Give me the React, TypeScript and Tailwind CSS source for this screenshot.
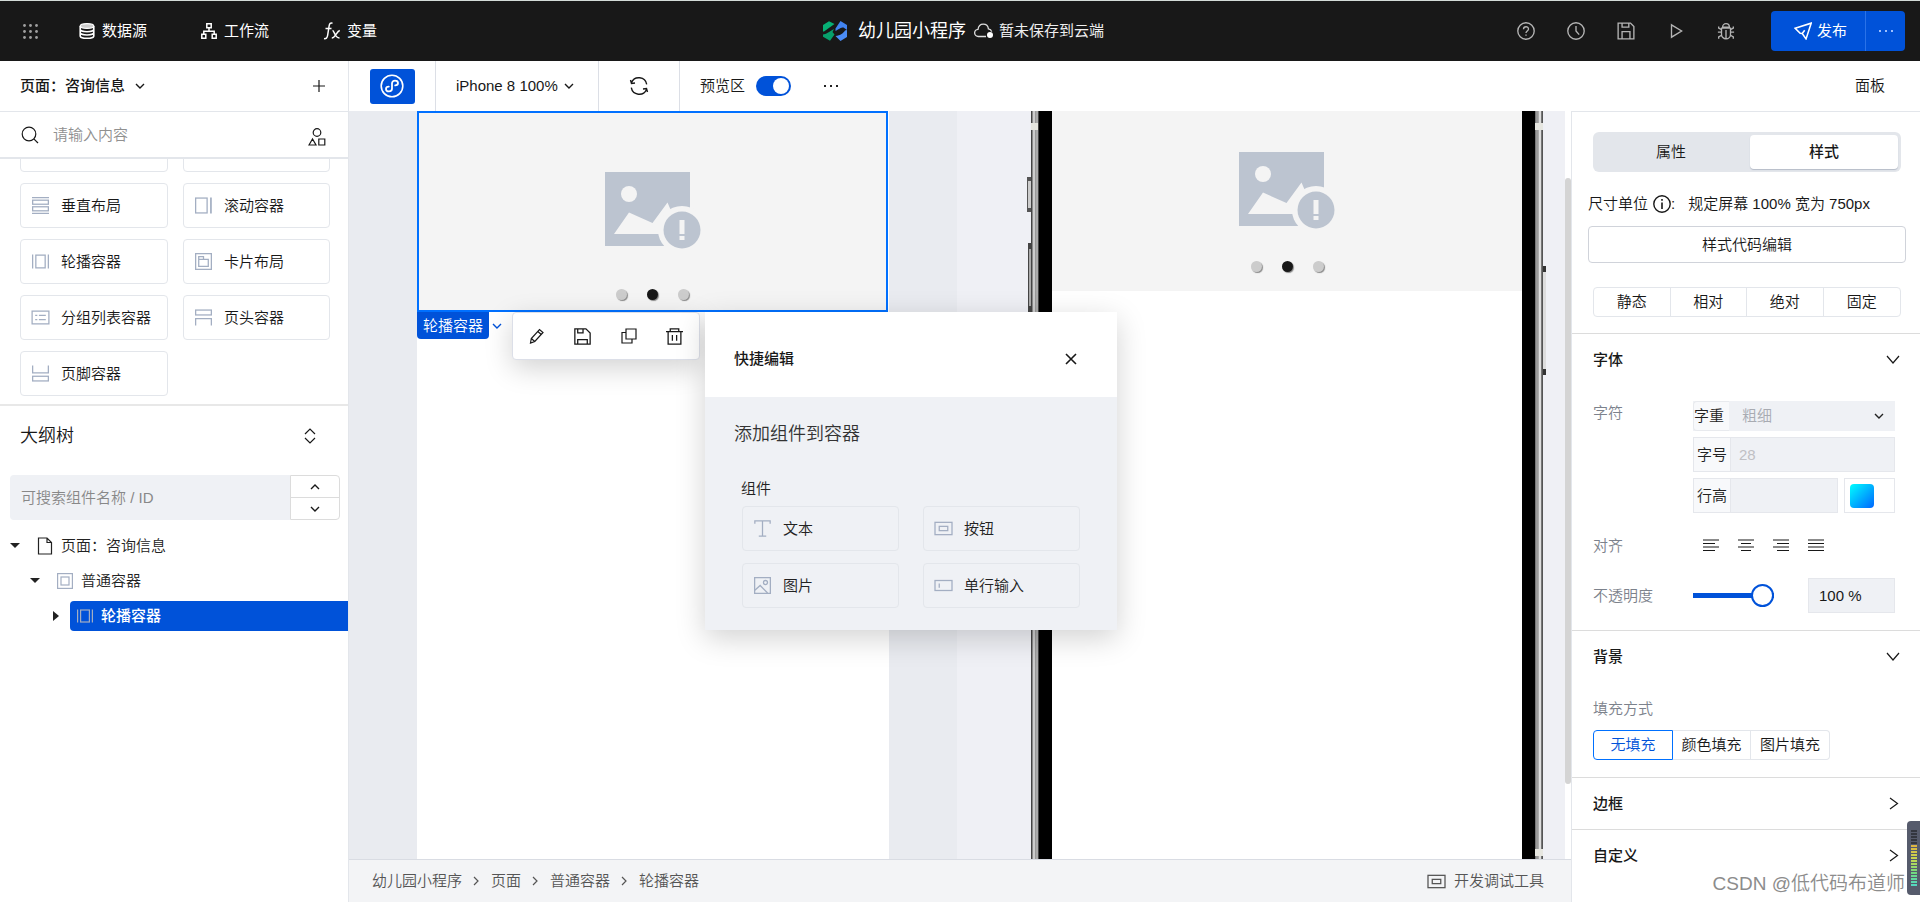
import React from 'react';

type IconProps = { className?: string };

const Svg = ({ className = '', box = '0 0 16 16', children }: { className?: string; box?: string; children: React.ReactNode }) => (
  <svg viewBox={box} fill="none" stroke="currentColor" strokeWidth="1.2" className={`shrink-0 ${className}`} aria-hidden="true">
    {children}
  </svg>
);

const ChevronDown = ({ className = 'h-2.5 w-2.5' }: IconProps) => (
  <Svg box="0 0 10 10" className={className}><path d="M1 3l4 4 4-4" strokeWidth="1.4" /></Svg>
);

const ChevronRight = ({ className = 'h-2.5 w-2.5' }: IconProps) => (
  <Svg box="0 0 10 10" className={className}><path d="M3 1l4 4-4 4" strokeWidth="1.2" /></Svg>
);

/* Component icons */
const icons: Record<string, React.ReactNode> = {
  vertical: <><path d="M0 .6h16M0 15.4h16" /><rect x=".6" y="3" width="14.8" height="3.8" /><rect x=".6" y="9.2" width="14.8" height="3.8" /></>,
  scroll: <><rect x=".6" y="1" width="10.8" height="14" /><path d="M15 .5v15" strokeWidth="1.6" /></>,
  swiper: <><path d="M.6 1.5v13M15.4 1.5v13" /><rect x="3.6" y="2" width="8.8" height="12" /></>,
  card: <><rect x=".6" y=".6" width="14.8" height="14.8" /><path d="M3.5 3.500H8V6h4.500v6.500h-9zM3.500 6H8" /></>,
  group: <><rect x=".1" y="2" width="15.8" height="12" /><path d="M3 6h2M3 10h2M6.500 6H13M6.500 10H13" strokeWidth="1.4" /></>,
  head: <><rect x=".6" y="1" width="14.8" height="4.6" /><path d="M.6 15.500V9h14.8v6.500" /></>,
  foot: <><rect x=".6" y="10.600" width="14.8" height="4.400" /><path d="M.6 .5V7.500h14.8V.5" /></>,
  box: <><rect x=".6" y=".6" width="14.8" height="14.8" /><rect x="4" y="4" width="8" height="8" /></>,
  text: <path d="M.8 3.500V.8h14.400v2.700M8 .8v14.400M4.500 15.200h7" />,
  button: <><rect x="0" y="2.200" width="16" height="11.600" /><rect x="4" y="6" width="8" height="4" /></>,
  image: <><rect x=".6" y=".6" width="14.8" height="14.8" /><circle cx="10.800" cy="5.200" r="1.900" /><path d="M.8 12.500l5-4.500 7 7" /></>,
  input: <><rect x="0" y="3.300" width="16" height="9.400" /><path d="M4 6v4" /></>,
};

const ComponentIcon = ({ name, className = 'h-4 w-4 text-[#a3aec2]' }: { name: string; className?: string }) => (
  <Svg className={`overflow-visible ${className}`}>{icons[name]}</Svg>
);

const ComponentCard = ({ icon, label }: { icon: string; label: string }) => (
  <button type="button" className="flex h-[45px] shrink-0 items-center gap-3 rounded border border-[#e3e6eb] px-[11px]">
    <ComponentIcon name={icon} className="h-[17px] w-[17px] text-[#a3aec2]" />
    <span className="whitespace-nowrap">{label}</span>
  </button>
);

const Header = () => (
  <header className="flex h-[61px] shrink-0 items-center border-t border-[#d3dbd7] bg-[#181818] font-normal text-white">
    <nav className="flex flex-1 items-center pl-[22px]">
      <button type="button" aria-label="菜单" className="mr-[40px] text-[#a0a0a0]">
        <svg viewBox="0 0 17 17" fill="currentColor" className="h-[17px] w-[17px]">
          {[2, 8, 14].map((y) => [2, 8, 14].map((x) => <circle key={`${x}-${y}`} cx={x + 0.5} cy={y + 0.5} r="1.4" />))}
        </svg>
      </button>
      <a href="#data" className="mr-[54px] flex items-center gap-[7px]">
        <Svg className="h-4 w-4">
          <ellipse cx="8" cy="3" rx="6.800" ry="2.400" fill="#ccc" />
          <path d="M1.200 3v10c0 1.300 3 2.400 6.800 2.400s6.800-1.100 6.800-2.400V3M1.200 6.300c0 1.300 3 2.400 6.800 2.400s6.800-1.100 6.800-2.400M1.200 9.600C1.200 10.900 4.200 12 8 12s6.800-1.100 6.800-2.400" strokeWidth="1.6" />
        </Svg>
        数据源
      </a>
      <a href="#flow" className="mr-[54px] flex items-center gap-[7px]">
        <Svg className="h-4 w-4">
          <path d="M5.800 .8h4.400v4H5.800zM.8 11.200h4v4h-4zM11.200 11.200h4v4h-4zM8 5v3.200M2.800 11V8.200h10.400V11" strokeWidth="1.5" />
        </Svg>
        工作流
      </a>
      <a href="#vars" className="flex items-center gap-[6px]">
        <Svg box="0 0 18 18" className="h-[18px] w-[18px]">
          <path d="M9.500 1.200C7.500 .6 6.500 1.500 6.100 4L4.600 13.500C4.200 16 3 17 1 16.600M2.500 6.500h6M9.500 8.500c2 0 2 7.500 7 7.500M16.800 8.500c-3 .5-4.500 7.500-8 7.500" strokeWidth="1.500" />
        </Svg>
        变量
      </a>
    </nav>
    <div className="flex items-center">
      <svg viewBox="0 0 24 20" className="mr-[11px] h-5 w-6" aria-hidden="true">
        <path d="M0 4L6 .3 11.500 3 1 10.500H0z" fill="#07b075" />
        <path d="M0 13.500c3-.2 6-2.500 11-5.500L9.500 11l2 2.500L7 19.700l-7-4z" fill="#07a06c" />
        <path d="M12.500 7.500L17.500 0 24 4v5l-3.500-2.500c-3 0-4 1.500-8 3.500z" fill="#4183f0" />
        <path d="M12.500 15c5-.5 8-3 9.500-5.500l2-.5v7l-6.500 4z" fill="#4b8cf5" />
      </svg>
      <h1 className="mr-2 text-lg">幼儿园小程序</h1>
      <svg viewBox="0 0 20 16" className="mr-[5px] h-4 w-5" fill="none" stroke="#ddd" strokeWidth="1.3" aria-hidden="true">
        <path d="M12 13.500H4.500a3.600 3.600 0 01-.5-7.200C4.500 3 6.500 1.200 9.200 1.200c2.800 0 4.900 1.900 5.200 4.700 1.600.2 2.900 1.300 3.300 2.800" />
        <circle cx="16" cy="12" r="3" fill="#fff" stroke="none" />
      </svg>
      <span className="text-[#eee]">暂未保存到云端</span>
    </div>
    <div className="flex flex-1 items-center justify-end pr-[15px]">
      <div className="mr-9 flex items-center gap-8 text-[#b4b4b4]">
        <button type="button" aria-label="帮助">
          <Svg className="h-[18px] w-[18px]"><circle cx="8" cy="8" r="7.300" /><path d="M5.800 6.500c0-3 4.400-3 4.400-.2C10.200 8 8 8 8 9.800M8 11v1.300" /></Svg>
        </button>
        <button type="button" aria-label="历史">
          <Svg className="h-[18px] w-[18px]"><circle cx="8" cy="8" r="7.300" /><path d="M8 3.500V8l2.800 3.200" /></Svg>
        </button>
        <button type="button" aria-label="保存">
          <Svg className="h-[18px] w-[18px]"><path d="M1 1h11l3 3v11H1zM4.500 1v3.500h6V1M4.500 15V8.500h7V15" /></Svg>
        </button>
        <button type="button" aria-label="预览">
          <Svg className="h-[18px] w-[18px]"><path d="M4 2.500l9 5.500-9 5.500z" /></Svg>
        </button>
        <button type="button" aria-label="调试">
          <Svg className="h-[18px] w-[18px]"><path d="M5 4.500a3 3 0 016 0zM4 5.500h8V11a4 4 0 01-8 0zM8 7v7.500M.8 9H4M12 9h3.200M1.500 4v1.500L4 6.800M14.500 4v1.500L12 6.800M1.500 14.800v-1.500L4 11.800M14.500 14.800v-1.500L12 11.800" /></Svg>
        </button>
      </div>
      <div className="flex h-10 overflow-hidden rounded bg-[#0052d9]">
        <button type="button" className="flex items-center gap-[5px] border-r border-[#2a72e8] pl-[23px] pr-[18px]">
          <Svg className="h-[18px] w-[18px]"><path d="M1 5.500L15.300 1l-4.600 14-3.400-4.700L5.500 10z M7.300 10.300l2.200-3" strokeWidth="1.400" /></Svg>
          发布
        </button>
        <button type="button" aria-label="更多发布选项" className="flex w-[39px] items-center justify-center gap-1">
          <i className="h-0.5 w-0.5 bg-[#9dc0ff]" /><i className="h-0.5 w-0.5 bg-[#9dc0ff]" /><i className="h-0.5 w-0.5 bg-[#9dc0ff]" />
        </button>
      </div>
    </div>
  </header>
);

const components = [
  ['vertical', '垂直布局'],
  ['scroll', '滚动容器'],
  ['swiper', '轮播容器'],
  ['card', '卡片布局'],
  ['group', '分组列表容器'],
  ['head', '页头容器'],
  ['foot', '页脚容器'],
];

const Sidebar = () => (
  <aside className="flex w-[349px] shrink-0 flex-col border-r border-[#e3e6eb] bg-white">
    <div className="flex h-[51px] shrink-0 items-center justify-between border-b border-[#e3e6eb] pl-5 pr-[23px]">
      <button type="button" className="flex items-center gap-2.5 font-medium">页面：咨询信息 <ChevronDown /></button>
      <button type="button" aria-label="新建页面"><Svg box="0 0 12 12" className="h-3 w-3"><path d="M6 0v12M0 6h12" /></Svg></button>
    </div>
    <div className="flex h-[47px] shrink-0 items-center border-b-2 border-[#e3e6eb] pl-[21px] pr-[22px]">
      <Svg box="0 0 18 18" className="h-[18px] w-[18px]"><circle cx="8" cy="8" r="6.800" /><path d="M12.800 12.800l4.200 4.200" /></Svg>
      <input aria-label="请输入内容" placeholder="请输入内容" className="ml-[14px] min-w-0 flex-1 outline-none placeholder:text-[#909090]" />
      <Svg box="0 0 18 18" className="mt-1 h-[18px] w-[18px]"><circle cx="9" cy="4.500" r="3.800" /><path d="M1 17l3.500-6L8 17zM10.800 11h6v6h-6z" /></Svg>
    </div>
    <div className="flex h-[245px] shrink-0 flex-col justify-end overflow-hidden px-5 pb-2">
      <div className="grid grid-cols-[148px_147px] gap-x-[15px] gap-y-[11px]">
        <ComponentCard icon="foot" label="" />
        <ComponentCard icon="foot" label="" />
        {components.map(([icon, label]) => <ComponentCard key={label} icon={icon} label={label} />)}
      </div>
    </div>

    {/* Outline tree */}
    <div className="flex h-[71px] shrink-0 items-center justify-between border-t-2 border-[#e8e8e8] pb-2.5 pl-5 pr-[32px]">
      <h2 className="text-lg">大纲树</h2>
      <button type="button" aria-label="展开全部">
        <Svg box="0 0 12 16" className="h-4 w-3"><path d="M1 6l5-5 5 5M1 10l5 5 5-5" /></Svg>
      </button>
    </div>
    <div className="ml-2.5 mr-2 flex h-[45px] shrink-0">
      <input aria-label="搜索组件" placeholder="可搜索组件名称 / ID" className="min-w-0 flex-1 rounded-l bg-[#eff1f5] px-[11px] outline-none placeholder:text-[#888]" />
      <div className="flex w-[50px] flex-col divide-y divide-[#dcdcdc] rounded-r border border-[#dcdcdc]">
        <button type="button" aria-label="上一个" className="flex flex-1 items-center justify-center"><ChevronDown className="h-2.5 w-2.5 rotate-180" /></button>
        <button type="button" aria-label="下一个" className="flex flex-1 items-center justify-center"><ChevronDown /></button>
      </div>
    </div>
    <ul className="pt-2 text-[#222]">
      <li className="flex h-[35px] items-center pl-2.5">
        <i className="border-x-[5px] border-t-[5px] border-x-transparent border-t-[#222]" />
        <Svg box="0 0 16 18" className="ml-[17px] mr-2 h-[18px] w-4"><path d="M1.500 1h8.500l4.500 4.500V17h-13zM10 1v4.500h4.500" /></Svg>
        页面：咨询信息
      </li>
      <li className="flex h-[35px] items-center pl-[30px]">
        <i className="border-x-[5px] border-t-[5px] border-x-transparent border-t-[#222]" />
        <ComponentIcon name="box" className="ml-[17px] mr-2 h-4 w-4 text-[#a3aec2]" />
        普通容器
      </li>
      <li className="flex h-[35px] items-center pl-[53px]">
        <i className="border-y-[5px] border-l-[6px] border-y-transparent border-l-[#222]" />
        <div className="ml-[11px] flex h-[30px] flex-1 items-center gap-2 rounded-l-sm bg-[#0052d9] pl-[7px] font-medium text-white">
          <ComponentIcon name="swiper" />
          轮播容器
        </div>
      </li>
    </ul>
  </aside>
);

const Toolbar = () => (
  <div className="flex h-[50px] shrink-0 items-center bg-white pr-[35px]">
    <div className="flex h-full w-[87px] items-center justify-center border-r border-[#dcdfe6]">
      <button type="button" aria-label="小程序" className="flex h-[35px] w-[45px] items-center justify-center rounded-[3px] bg-[#0052d9] text-white">
        <Svg box="0 0 24 24" className="h-6 w-6">
          <circle cx="12" cy="12" r="10.800" strokeWidth="1.600" />
          <path d="M8.800 12.600c-1.600 0-2.800 1-2.800 2.300 0 1.400 1.300 2.500 3 2.500s3-1.200 3-2.900V9.500c0-1.700 1.300-2.900 3-2.900s3 1.100 3 2.500c0 1.300-1.200 2.300-2.800 2.300" strokeWidth="1.800" strokeLinecap="round" />
        </Svg>
      </button>
    </div>
    <button type="button" className="flex h-full w-[163px] items-center gap-1.5 whitespace-nowrap border-r border-[#dcdfe6] pl-5">
      iPhone 8 100% <ChevronDown />
    </button>
    <button type="button" aria-label="刷新" className="flex h-full w-[81px] items-center justify-center border-r border-[#dcdfe6]">
      <Svg box="0 0 20 20" className="h-5 w-5"><path d="M2.500 6.500a8 8 0 0115.200 1.800M1.500 4l1 3.500L6 7M17.500 13.500A8 8 0 012.300 11.700M18.500 16l-1-3.500L14 13" strokeWidth="1.400" /></Svg>
    </button>
    <label className="ml-5 flex items-center gap-[11px]">
      预览区
      <input type="checkbox" defaultChecked className="flex h-5 w-[35px] appearance-none items-center justify-end rounded-full bg-[#0052d9] px-0.5 before:h-4 before:w-4 before:rounded-full before:bg-white" />
    </label>
    <button type="button" aria-label="更多" className="ml-[33px] flex gap-1">
      <i className="h-0.5 w-0.5 bg-[#222]" /><i className="h-0.5 w-0.5 bg-[#222]" /><i className="h-0.5 w-0.5 bg-[#222]" />
    </button>
    <button type="button" className="ml-auto">面板</button>
  </div>
);

const SwiperPlaceholder = ({ dotsClass }: { dotsClass: string }) => (
  <div className="flex flex-col items-center">
    <svg viewBox="0 0 96 77" className="h-[77px] w-24" aria-hidden="true">
      <path d="M0 0h85v74H0z" fill="#bcc4d0" />
      <circle cx="24" cy="22" r="8" fill="#f4f4f4" />
      <path d="M9 62l15-21.500L47.500 51 62.500 30.500 70 48v14z" fill="#f4f4f4" />
      <circle cx="77" cy="58" r="24" fill="#f4f4f4" />
      <circle cx="77" cy="58" r="18.500" fill="#bcc4d0" />
      <path d="M74.500 48h5v14h-5zM74.500 64h5v4h-5z" fill="#f4f4f4" />
    </svg>
    <div className={`flex gap-5 ${dotsClass}`}>
      <i className="h-[11px] w-[11px] rounded-full bg-[#ccc] shadow-[1px_1px_1px_#888]" />
      <i className="h-[11px] w-[11px] rounded-full bg-[#181818] shadow-[1px_1px_1px_#888]" />
      <i className="h-[11px] w-[11px] rounded-full bg-[#ccc] shadow-[1px_1px_1px_#888]" />
    </div>
  </div>
);

const PhonePreview = () => (
  <div className="relative flex h-full w-[512px] shrink-0">
    <div className="w-2 bg-[linear-gradient(90deg,#444_0_1px,#888_1px_2px,#ccc_2px_4px,#999_4px_5px,#aaa_5px_7px,#444_7px)]" />
    <div className="w-[13px] bg-black" />
    <div className="flex-1 bg-white">
      <div className="flex h-[180px] justify-center bg-[#f4f4f4] pt-[41px]">
        <SwiperPlaceholder dotsClass="mt-8" />
      </div>
    </div>
    <div className="w-[13px] bg-black" />
    <div className="w-2 bg-[linear-gradient(90deg,#777_0_1px,#999_1px_3px,#aaa_3px_4px,#ddd_4px_6px,#777_6px_7px,#555_7px)]" />
    {/* Antenna bands and side keys */}
    <i className="absolute left-0 top-3 h-[7px] w-[7px] bg-[#e6e6e0]" />
    <i className="absolute right-0 top-3 h-[7px] w-2 bg-[#e6e6e0]" />
    <i className="absolute bottom-[3px] right-0 h-[7px] w-2 bg-[#e6e6e0]" />
    <i className="absolute -left-1 top-[66px] h-[35px] w-1 border-y-4 border-l border-[#555] bg-[#ccc]" />
    <i className="absolute -left-[3px] top-[132px] h-[69px] w-[3px] border-y-[6px] border-l border-[#444] bg-[#aaa]" />
    <i className="absolute -right-[3px] top-[155px] h-[109px] w-[3px] border-y-[6px] border-[#333] bg-[#ddd]" />
  </div>
);

const QuickEdit = () => (
  <section className="absolute left-[356px] top-[201px] w-[412px] bg-[#eff1f5] shadow-[0_8px_28px_rgba(0,0,0,0.18)]">
    <div className="flex h-[85px] items-center justify-between bg-white pl-[29px] pr-10 pt-2">
      <h2 className="font-medium">快捷编辑</h2>
      <button type="button" aria-label="关闭"><Svg box="0 0 12 12" className="h-3 w-3"><path d="M1 1l10 10M11 1L1 11" strokeWidth="1.600" /></Svg></button>
    </div>
    <div className="px-[29px] pb-[22px] pt-[23px] text-[#222]">
      <h3 className="text-lg leading-7 text-[#333]">添加组件到容器</h3>
      <div className="px-[7px] pt-[31px] leading-5">组件</div>
      <div className="grid grid-cols-2 gap-x-6 gap-y-3 px-2 pt-[7px]">
        <ComponentCard icon="text" label="文本" />
        <ComponentCard icon="button" label="按钮" />
        <ComponentCard icon="image" label="图片" />
        <ComponentCard icon="input" label="单行输入" />
      </div>
    </div>
  </section>
);

const Canvas = () => (
  <div className="flex min-h-0 flex-1">
    <div className="relative flex flex-1 overflow-hidden bg-[#eff0f5]">
      <div className="flex w-[608px] shrink-0 justify-start bg-[#e9ebf0] pl-[68px]">
        <div className="w-[472px] bg-white">
          <div className="flex h-[201px] w-[471px] justify-center border-2 border-[#0070ff] bg-[#f4f4f4] pt-[59px]">
            <SwiperPlaceholder dotsClass="mt-10" />
          </div>
        </div>
      </div>
      <div className="pl-[74px]">
        <PhonePreview />
      </div>

      {/* Selected component actions */}
      <div className="absolute left-[68px] top-[201px] flex items-start">
        <button type="button" className="flex items-center">
          <span className="h-[27px] rounded-b bg-[#0052d9] px-1.5 leading-[27px] text-white">轮播容器</span>
          <ChevronDown className="ml-[3px] h-2.5 w-2.5 text-[#0052d9]" />
        </button>
        <div className="ml-2.5 flex h-[48px] w-[188px] items-center justify-between rounded border border-[#dcdfe8] bg-white px-4 shadow-[0_8px_28px_rgba(0,0,0,0.18)]">
          <button type="button" aria-label="编辑"><Svg className="h-4 w-4"><path d="M1.500 15l.8-4.500L10.500 1.500l3.500 3L5.800 13.500zM8.800 3.500l3.500 3M2.300 10.500l3.500 3" /></Svg></button>
          <button type="button" aria-label="保存"><Svg className="h-[17px] w-[17px]"><path d="M.8 .8h10.400l4 4v10.400H.8zM3.500 .8v3.700h5V.8M3.500 15.200v-4.200h9v4.200" /></Svg></button>
          <button type="button" aria-label="复制"><Svg className="h-4 w-4"><path d="M5 1h10v10H5zM5 4.500H1V15h10v-4" /></Svg></button>
          <button type="button" aria-label="删除"><Svg className="h-[17px] w-[17px]"><path d="M0 3.500h16M4 3.500V.8h8v2.700M2 3.500v11.700h12V3.500M6 6.500V12M10 6.500V12" /></Svg></button>
        </div>
      </div>
      <QuickEdit />
    </div>
    <div className="w-1.5 bg-white pt-[67px]">
      <div className="h-[606px] rounded bg-[#d4d4d4]" />
    </div>
  </div>
);

const crumbs = ['幼儿园小程序', '页面', '普通容器', '轮播容器'];

const StatusBar = () => (
  <footer className="flex h-[43px] shrink-0 items-center justify-between border-t border-[#d9dce3] bg-[#f3f4f6] pl-[23px] pr-[27px] text-[#555]">
    <nav className="flex items-center">
      {crumbs.map((crumb, i) => (
        <React.Fragment key={crumb}>
          {i > 0 && <ChevronRight className="ml-[9px] mr-2.5 h-2.5 w-2.5" />}
          <a href="#crumb">{crumb}</a>
        </React.Fragment>
      ))}
    </nav>
    <button type="button" className="flex items-center gap-[9px]"><ComponentIcon name="button" className="h-[17px] w-[17px]" />开发调试工具</button>
  </footer>
);

const Section = ({ title, open, children }: { title: string; open?: boolean; children?: React.ReactNode }) => (
  <section className="border-t border-[#dcdcdc]">
    <button type="button" className="flex h-[51px] w-full items-center justify-between pl-[21px] pr-5">
      <h3 className="font-medium">{title}</h3>
      <Svg box="0 0 14 14" className="h-3.5 w-3.5">
        <path d={open ? 'M1 3l6 7 6-7' : 'M4 1l7.500 5.500L4 12'} />
      </Svg>
    </button>
    {children}
  </section>
);

const alignLines = [
  ['左对齐', 'M0 1h16M0 4.500h12M0 8h16M0 11.500h12'],
  ['居中', 'M0 1h16M3 4.500h10M0 8h16M3 11.500h10'],
  ['右对齐', 'M0 1h16M4 4.500h12M0 8h16M4 11.500h12'],
  ['两端对齐', 'M0 1h16M0 4.500h16M0 8h16M0 11.500h16'],
];

const StylePanel = () => (
  <aside className="w-[349px] shrink-0 overflow-hidden border-l border-t border-[#e3e6eb] bg-white">
    <div className="ml-[21px] mr-[19px] mt-5 flex h-10 rounded-md bg-[#e3e6eb] p-[3px]">
      <button type="button" className="flex-1 pr-1">属性</button>
      <button type="button" className="w-[148px] rounded bg-white font-medium shadow-[0_1px_1px_#b5bcc8]">样式</button>
    </div>
    <div className="mt-5 flex h-6 items-center pl-4">
      尺寸单位
      <Svg box="0 0 18 18" className="ml-[5px] h-[18px] w-[18px]"><circle cx="9" cy="9" r="8.200" strokeWidth="1.400" /><path d="M9 7.500V14M9 4v1.800" strokeWidth="1.600" /></Svg>
      <span>:</span>
      <span className="ml-[13px] whitespace-nowrap">规定屏幕 100% 宽为 750px</span>
    </div>
    <button type="button" className="ml-4 mt-2.5 flex h-[37px] w-[318px] items-center justify-center rounded-sm border border-[#d0d3da]">样式代码编辑</button>
    <div className="mb-4 ml-[21px] mr-[19px] mt-6 grid h-[30px] grid-cols-4 divide-x divide-[#e3e6eb] rounded border border-[#e3e6eb]">
      {['静态', '相对', '绝对', '固定'].map((t) => <button key={t} type="button">{t}</button>)}
    </div>

    <Section title="字体" open>
      <div className="flex flex-col gap-[15px] pb-[17px] pl-[21px] pr-[25px] pt-4">
        <div className="flex text-[#7c828c]">
          <div className="w-[100px] shrink-0 leading-6">字符</div>
          <div className="flex min-w-0 flex-1 flex-col gap-1.5 text-[#222]">
            <label className="relative flex h-[30px] items-center bg-[#eff1f5]">
              <span className="flex h-full w-9 shrink-0 items-center rounded-l border border-r-0 border-[#e8eaee] bg-[#f8f9fb]">字重</span>
              <select className="h-full min-w-0 flex-1 appearance-none bg-transparent pl-[13px] text-[#a8abb2] outline-none"><option>粗细</option></select>
              <ChevronDown className="absolute right-[11px] h-2.5 w-2.5" />
            </label>
            <label className="flex h-[35px] border border-[#e5e7ec]">
              <span className="flex w-[37px] shrink-0 items-center border-r border-[#e5e7ec] bg-[#f8f9fb] pl-[3px]">字号</span>
              <input placeholder="28" className="min-w-0 flex-1 bg-[#eff1f5] px-2 outline-none placeholder:text-[#c0c0c4]" />
            </label>
            <div className="flex gap-1.5">
              <label className="flex h-[35px] min-w-0 flex-1 border border-[#e5e7ec]">
                <span className="flex w-[37px] shrink-0 items-center border-r border-[#e5e7ec] bg-[#f8f9fb] pl-[3px]">行高</span>
                <input className="min-w-0 flex-1 bg-[#eff1f5] px-2 outline-none" />
              </label>
              <button type="button" aria-label="颜色" className="flex h-[35px] w-[51px] shrink-0 items-center border border-[#e5e7ec] pl-[5px]">
                <i className="h-6 w-6 rounded-sm bg-[linear-gradient(135deg,#00ffff,#0066ff)]" />
              </button>
            </div>
          </div>
        </div>
        <div className="flex h-[35px] items-center">
          <div className="w-[110px] text-[#7c828c]">对齐</div>
          <div className="flex gap-[19px]">
            {alignLines.map(([label, d]) => (
              <button key={label} type="button" aria-label={label}><Svg box="0 0 16 13" className="h-[13px] w-4"><path d={d} strokeWidth="1.100" /></Svg></button>
            ))}
          </div>
        </div>
        <div className="flex h-[35px] items-center">
          <label htmlFor="opacity" className="w-[100px] text-[#7c828c]">不透明度</label>
          <input
            id="opacity"
            type="range"
            defaultValue={100}
            className="h-[5px] w-[81px] appearance-none bg-[#0052d9] [&::-webkit-slider-thumb]:h-[23px] [&::-webkit-slider-thumb]:w-[23px] [&::-webkit-slider-thumb]:appearance-none [&::-webkit-slider-thumb]:rounded-full [&::-webkit-slider-thumb]:border-2 [&::-webkit-slider-thumb]:border-[#0052d9] [&::-webkit-slider-thumb]:bg-white"
          />
          <input aria-label="不透明度数值" defaultValue="100 %" className="ml-auto h-[35px] w-[87px] border border-[#e5e7ec] bg-[#eff1f5] px-2.5 outline-none" />
        </div>
      </div>
    </Section>
    <Section title="背景" open>
      <div className="pb-[17px] pl-[21px] pt-[15px]">
        <div className="leading-6 text-[#7c828c]">填充方式</div>
        <div className="mt-[9px] flex h-[30px]">
          <button type="button" className="w-20 rounded-l border border-[#0070ff] text-[#0052d9]">无填充</button>
          <button type="button" className="w-[78px] border-y border-r border-[#e3e6eb]">颜色填充</button>
          <button type="button" className="w-[79px] rounded-r border-y border-r border-[#e3e6eb]">图片填充</button>
        </div>
      </div>
    </Section>
    <Section title="边框" />
    <Section title="自定义" />
  </aside>
);

const App = () => (
  <div className="relative flex h-screen min-w-[1280px] flex-col overflow-hidden bg-white font-['Liberation_Sans','Noto_Sans_CJK_SC',sans-serif] text-[15px] font-[350] leading-5 text-[#181818]">
    <Header />
    <div className="flex min-h-0 flex-1">
      <Sidebar />
      <main className="flex min-w-0 flex-1 flex-col">
        <Toolbar />
        <div className="flex min-h-0 flex-1">
          <div className="flex min-w-0 flex-1 flex-col">
            <Canvas />
            <StatusBar />
          </div>
          <StylePanel />
        </div>
      </main>
    </div>

    {/* Watermark and floating meter */}
    <div className="absolute bottom-1 right-[15px] text-[19px] leading-7 text-[#8c8c8c]">CSDN @低代码布道师</div>
    <div className="absolute bottom-[7px] right-0 h-[74px] w-[13px] rounded-l bg-[#565b6c] p-1 pt-2">
      <div className="h-[58px] w-1.5 bg-[repeating-linear-gradient(0deg,#565b6c_0_1px,transparent_1px_3px),linear-gradient(180deg,#33363f_0_15px,#e0b040_15px,#c8d850_30px,#70d880_44px,#50d8c8)]" />
    </div>
  </div>
);

export default App;
